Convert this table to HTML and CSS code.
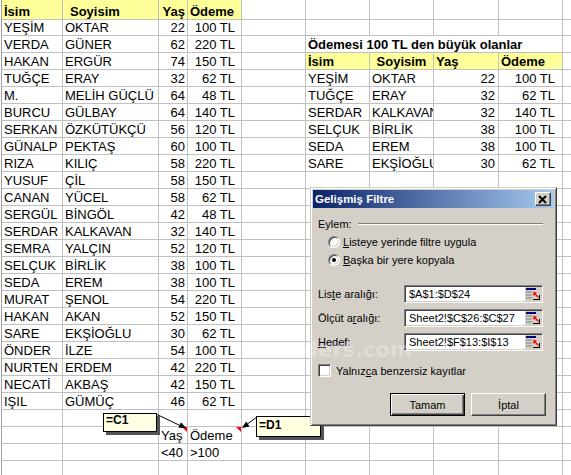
FILE: index.html
```html
<!DOCTYPE html>
<html lang="tr">
<head>
<meta charset="utf-8">
<title>Gelişmiş Filtre</title>
<link rel="stylesheet" href="styles.css">
</head>
<body>
<div class="sheet">
  <div class="row first"><span class="hd b">İsim</span><span class="hd b sy">Soyisim</span><span class="hd b r">Yaş</span><span class="hd b">Ödeme</span><span></span><span></span><span></span><span></span><span></span><span></span></div>
  <div class="row"><span>YEŞİM</span><span>OKTAR</span><span class="r">22</span><span class="m">100 TL</span><span></span><span></span><span></span><span></span><span></span><span></span></div>
  <div class="row"><span>VERDA</span><span>GÜNER</span><span class="r">62</span><span class="m">220 TL</span><span></span><span class="title b">Ödemesi 100 TL den büyük olanlar</span><span></span></div>
  <div class="row"><span>HAKAN</span><span>ERGÜR</span><span class="r">74</span><span class="m">150 TL</span><span></span><span class="hd b">İsim</span><span class="hd b ctr">Soyisim</span><span class="hd b">Yaş</span><span class="hd b">Ödeme</span><span></span></div>
  <div class="row"><span>TUĞÇE</span><span>ERAY</span><span class="r">32</span><span class="m">62 TL</span><span></span><span>YEŞİM</span><span class="clip">OKTAR</span><span class="r3">22</span><span class="m2">100 TL</span><span></span></div>
  <div class="row"><span>M.</span><span>MELİH GÜÇLÜ</span><span class="r">64</span><span class="m">48 TL</span><span></span><span>TUĞÇE</span><span class="clip">ERAY</span><span class="r3">32</span><span class="m2">62 TL</span><span></span></div>
  <div class="row"><span>BURCU</span><span>GÜLBAY</span><span class="r">64</span><span class="m">140 TL</span><span></span><span>SERDAR</span><span class="clip">KALKAVAN</span><span class="r3">32</span><span class="m2">140 TL</span><span></span></div>
  <div class="row"><span>SERKAN</span><span>ÖZKÜTÜKÇÜ</span><span class="r">56</span><span class="m">120 TL</span><span></span><span>SELÇUK</span><span class="clip">BİRLİK</span><span class="r3">38</span><span class="m2">100 TL</span><span></span></div>
  <div class="row"><span>GÜNALP</span><span>PEKTAŞ</span><span class="r">60</span><span class="m">100 TL</span><span></span><span>SEDA</span><span class="clip">EREM</span><span class="r3">38</span><span class="m2">100 TL</span><span></span></div>
  <div class="row"><span>RIZA</span><span>KILIÇ</span><span class="r">58</span><span class="m">220 TL</span><span></span><span>SARE</span><span class="clip">EKŞİOĞLU</span><span class="r3">30</span><span class="m2">62 TL</span><span></span></div>
  <div class="row"><span>YUSUF</span><span>ÇİL</span><span class="r">58</span><span class="m">150 TL</span><span></span><span></span><span></span><span></span><span></span><span></span></div>
  <div class="row"><span>CANAN</span><span>YÜCEL</span><span class="r">58</span><span class="m">62 TL</span><span></span><span></span><span></span><span></span><span></span><span></span></div>
  <div class="row"><span>SERGÜL</span><span>BİNGÖL</span><span class="r">42</span><span class="m">48 TL</span><span></span><span></span><span></span><span></span><span></span><span></span></div>
  <div class="row"><span>SERDAR</span><span>KALKAVAN</span><span class="r">32</span><span class="m">140 TL</span><span></span><span></span><span></span><span></span><span></span><span></span></div>
  <div class="row"><span>SEMRA</span><span>YALÇIN</span><span class="r">52</span><span class="m">120 TL</span><span></span><span></span><span></span><span></span><span></span><span></span></div>
  <div class="row"><span>SELÇUK</span><span>BİRLİK</span><span class="r">38</span><span class="m">100 TL</span><span></span><span></span><span></span><span></span><span></span><span></span></div>
  <div class="row"><span>SEDA</span><span>EREM</span><span class="r">38</span><span class="m">100 TL</span><span></span><span></span><span></span><span></span><span></span><span></span></div>
  <div class="row"><span>MURAT</span><span>ŞENOL</span><span class="r">54</span><span class="m">220 TL</span><span></span><span></span><span></span><span></span><span></span><span></span></div>
  <div class="row"><span>HAKAN</span><span>AKAN</span><span class="r">52</span><span class="m">150 TL</span><span></span><span></span><span></span><span></span><span></span><span></span></div>
  <div class="row"><span>SARE</span><span>EKŞİOĞLU</span><span class="r">30</span><span class="m">62 TL</span><span></span><span></span><span></span><span></span><span></span><span></span></div>
  <div class="row"><span>ÖNDER</span><span>İLZE</span><span class="r">54</span><span class="m">100 TL</span><span></span><span></span><span></span><span></span><span></span><span></span></div>
  <div class="row"><span>NURTEN</span><span>ERDEM</span><span class="r">42</span><span class="m">220 TL</span><span></span><span></span><span></span><span></span><span></span><span></span></div>
  <div class="row"><span>NECATİ</span><span>AKBAŞ</span><span class="r">42</span><span class="m">150 TL</span><span></span><span></span><span></span><span></span><span></span><span></span></div>
  <div class="row"><span>IŞIL</span><span>GÜMÜÇ</span><span class="r">46</span><span class="m">62 TL</span><span></span><span></span><span></span><span></span><span></span><span></span></div>
  <div class="row"><span></span><span></span><span></span><span></span><span></span><span></span><span></span><span></span><span></span><span></span></div>
  <div class="row"><span></span><span></span><span>Yaş</span><span>Ödeme</span><span></span><span></span><span></span><span></span><span></span><span></span></div>
  <div class="row"><span></span><span></span><span>&lt;40</span><span>&gt;100</span><span></span><span></span><span></span><span></span><span></span><span></span></div>
  <div class="row"><span></span><span></span><span></span><span></span><span></span><span></span><span></span><span></span><span></span><span></span></div>
</div>

<div class="cm cm1">=C1</div>
<div class="cm cm2">=D1</div>

<svg class="marks" width="571" height="475" viewBox="0 0 571 475">
  <polygon points="182,427 187,427 187,432" fill="#ff0000"/>
  <polygon points="236,427 241,427 241,432" fill="#ff0000"/>
  <line x1="156" y1="414" x2="181" y2="426" stroke="#000" stroke-width="1"/>
  <polygon points="186,428 178.4,427.7 181,422.3" fill="#000"/>
  <line x1="257" y1="417" x2="246" y2="425" stroke="#000" stroke-width="1"/>
  <polygon points="242,428 246.1,421.5 249.5,426.5" fill="#000"/>
</svg>

<div class="dlg">
  <div class="tb">
    <span>Gelişmiş Filtre</span>
    <span class="close"><svg width="10" height="9" viewBox="0 0 10 9"><path d="M1 1 L8 8 M8 1 L1 8" stroke="#000" stroke-width="2" fill="none"/></svg></span>
  </div>
  <div class="db">
    <div class="grp"><span>Eylem:</span><span class="etch"></span></div>
    <div class="opt first-opt"><span class="radio"></span><span><u>L</u>isteye yerinde filtre uygula</span></div>
    <div class="opt"><span class="radio on"></span><span><u>B</u>aşka bir yere kopyala</span></div>
    <div class="fld f1"><span class="lbl">Lis<u>t</u>e aralığı:</span><span class="inp"><span>$A$1:$D$24</span><span class="pick"><svg width="16" height="14" viewBox="0 0 16 14"><rect x="1" y="1" width="10" height="2" fill="#000080"/><path d="M1 5h6M1 8h6M1 11h6" stroke="#808080" stroke-width="1"/><path d="M13.5 10.5 L9.5 6.5" stroke="#ff0000" stroke-width="1.5"/><polygon points="8,5 12,5.5 8.5,9" fill="#ff0000"/><path d="M8 12.5h7M14.5 8v5" stroke="#000" stroke-width="1"/></svg></span></span></div>
    <div class="fld"><span class="lbl">Ölçüt a<u>r</u>alığı:</span><span class="inp"><span>Sheet2!$C$26:$C$27</span><span class="pick"><svg width="16" height="14" viewBox="0 0 16 14"><rect x="1" y="1" width="10" height="2" fill="#000080"/><path d="M1 5h6M1 8h6M1 11h6" stroke="#808080" stroke-width="1"/><path d="M13.5 10.5 L9.5 6.5" stroke="#ff0000" stroke-width="1.5"/><polygon points="8,5 12,5.5 8.5,9" fill="#ff0000"/><path d="M8 12.5h7M14.5 8v5" stroke="#000" stroke-width="1"/></svg></span></span></div>
    <div class="fld"><span class="lbl"><u>H</u>edef:</span><span class="inp"><span>Sheet2!$F$13:$I$13</span><span class="pick"><svg width="16" height="14" viewBox="0 0 16 14"><rect x="1" y="1" width="10" height="2" fill="#000080"/><path d="M1 5h6M1 8h6M1 11h6" stroke="#808080" stroke-width="1"/><path d="M13.5 10.5 L9.5 6.5" stroke="#ff0000" stroke-width="1.5"/><polygon points="8,5 12,5.5 8.5,9" fill="#ff0000"/><path d="M8 12.5h7M14.5 8v5" stroke="#000" stroke-width="1"/></svg></span></span></div>
    <div class="chk"><span class="box"></span><span>Yalnız<u>c</u>a benzersiz kayıtlar</span></div>
    <div class="btns"><span class="btn def">Tamam</span><span class="btn">İptal</span></div>
  </div>
</div>

<div class="wm">ders.com</div>
</body>
</html>
```

FILE: styles.css
```css
html, body {
  margin: 0;
  padding: 0;
  overflow: hidden;
  background: #ffffff;
}
body {
  position: relative;
  width: 571px;
  height: 475px;
  font-family: "Liberation Sans", Arial, sans-serif;
  font-size: 13px;
  color: #000;
}

/* ---------- spreadsheet grid ---------- */
.sheet {
  margin-left: 1px;
  border-left: 1px solid #a0a0a0;
  width: 626px;
}
.row {
  display: grid;
  grid-template-columns: 61px 96px 29px 54px 64px 64px 64px 65px 64px 64px;
  height: 17px;
}
.row.first { height: 19px; }
.row > span {
  box-sizing: border-box;
  border-right: 1px solid #c0c0c0;
  border-bottom: 1px solid #c0c0c0;
  padding: 1px 2px 0 2px;
  line-height: 15px;
  white-space: nowrap;
  min-width: 0;
}
.row.first > span { padding-top: 4px; }
.hd { background: #ffff99; }
.b { font-weight: bold; }
.sy { padding-left: 7px !important; }
.ctr { text-align: center; }
.r { text-align: right; }
.r3 { text-align: right; padding-right: 3px !important; }
.m { text-align: right; padding-right: 6px !important; }
.m2 { text-align: right; padding-right: 7px !important; }
.clip { overflow: hidden; }
.title { grid-column: span 4; }

/* ---------- comments ---------- */
.cm {
  position: absolute;
  box-sizing: border-box;
  background: #ffffe1;
  border: 1px solid #000;
  box-shadow: 3px 3px 0 #555555;
  font-family: "Liberation Sans", Arial, sans-serif;
  font-weight: bold;
  font-size: 12px;
  line-height: 12px;
  padding: 0 2px;
}
.cm1 { left: 103px; top: 413px; width: 54px; height: 19px; }
.cm2 { left: 256px; top: 416px; width: 65px; height: 21px; padding-top: 2px; }
.marks {
  position: absolute;
  left: 0;
  top: 0;
  pointer-events: none;
}

/* ---------- dialog ---------- */
.dlg {
  position: absolute;
  left: 310px;
  top: 187px;
  width: 247px;
  height: 239px;
  box-sizing: border-box;
  background: #d4d0c8;
  border: 1px solid;
  border-color: #d4d0c8 #404040 #404040 #d4d0c8;
  box-shadow: inset 1px 1px 0 #ffffff, inset -1px -1px 0 #808080;
  padding: 2px;
  display: flex;
  flex-direction: column;
  font-family: "Liberation Sans", Arial, sans-serif;
  font-size: 11px;
}
.tb {
  height: 18px;
  background: linear-gradient(to right, #0a246a, #a6caf0);
  color: #fff;
  font-weight: bold;
  font-size: 11.5px;
  display: flex;
  align-items: center;
  justify-content: space-between;
  padding: 0 3px 0 2px;
}
.close {
  box-sizing: border-box;
  width: 16px;
  height: 14px;
  background: #d4d0c8;
  border: 1px solid;
  border-color: #ffffff #404040 #404040 #ffffff;
  box-shadow: inset -1px -1px 0 #808080;
  display: flex;
  align-items: center;
  justify-content: center;
}
.db {
  padding: 9px 11px 0 5px;
}
.grp {
  display: flex;
  align-items: center;
  height: 13px;
}
.etch {
  flex: 1;
  margin-left: 6px;
  border-top: 1px solid #808080;
  border-bottom: 1px solid #ffffff;
}
.opt {
  display: flex;
  align-items: center;
  gap: 3px;
  height: 16px;
  margin-left: 10px;
  margin-top: 2px;
}
.opt.first-opt { margin-top: 4px; }
.radio {
  box-sizing: border-box;
  width: 12px;
  height: 12px;
  border-radius: 50%;
  background: #fff;
  border: 1px solid;
  border-color: #808080 #ffffff #ffffff #808080;
  box-shadow: inset 1px 1px 0 #404040, inset -1px -1px 0 #d4d0c8;
  display: flex;
  align-items: center;
  justify-content: center;
}
.radio.on::after {
  content: "";
  width: 4px;
  height: 4px;
  border-radius: 50%;
  background: #000;
}
.fld {
  display: flex;
  align-items: center;
  height: 18px;
  margin-top: 6px;
}
.fld.f1 { margin-top: 17px; }
.lbl { flex: 1; }
.inp {
  box-sizing: border-box;
  width: 139px;
  height: 18px;
  background: #fff;
  border: 1px solid;
  border-color: #808080 #ffffff #ffffff #808080;
  box-shadow: inset 1px 1px 0 #404040, inset -1px -1px 0 #d4d0c8;
  display: flex;
  align-items: center;
  padding: 0 1px 0 4px;
  white-space: nowrap;
}
.pick {
  margin-left: auto;
  width: 16px;
  height: 14px;
  background: #d4d0c8;
  display: flex;
}
.chk {
  display: flex;
  align-items: center;
  gap: 5px;
  height: 13px;
  margin-top: 13px;
}
.box {
  box-sizing: border-box;
  width: 13px;
  height: 13px;
  background: #fff;
  border: 1px solid;
  border-color: #808080 #ffffff #ffffff #808080;
  box-shadow: inset 1px 1px 0 #404040, inset -1px -1px 0 #d4d0c8;
}
.btns {
  display: flex;
  justify-content: flex-end;
  gap: 6px;
  margin-top: 16px;
  margin-right: -3px;
}
.btn {
  box-sizing: border-box;
  width: 75px;
  height: 23px;
  display: flex;
  align-items: center;
  justify-content: center;
  border: 1px solid;
  border-color: #ffffff #404040 #404040 #ffffff;
  box-shadow: inset -1px -1px 0 #808080;
}
.btn.def {
  border-color: #000;
  box-shadow: inset 1px 1px 0 #ffffff, inset -1px -1px 0 #404040, inset -2px -2px 0 #808080;
}

/* ---------- faint watermark ---------- */
.wm {
  position: absolute;
  left: 303px;
  top: 343px;
  font-family: "DejaVu Sans", sans-serif;
  font-weight: bold;
  font-size: 21px;
  line-height: 14px;
  color: rgba(255, 255, 255, 0.28);
  pointer-events: none;
}
```
